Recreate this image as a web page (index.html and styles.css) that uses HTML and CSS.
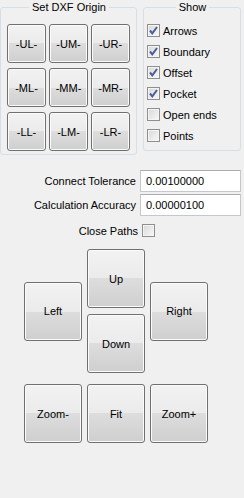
FILE: index.html
```
<!DOCTYPE html>
<html lang="en">
<head>
    <meta charset="UTF-8">
    <meta name="viewport" content="width=device-width, initial-scale=1.0">
    <title>DXF View</title>
    <link rel="stylesheet" href="styles.css">
</head>
<body>
    <div class="top">
        <fieldset class="group origin">
            <legend>Set DXF Origin</legend>
            <div class="origin-grid">
                <button class="btn">-UL-</button>
                <button class="btn">-UM-</button>
                <button class="btn">-UR-</button>
                <button class="btn">-ML-</button>
                <button class="btn">-MM-</button>
                <button class="btn">-MR-</button>
                <button class="btn">-LL-</button>
                <button class="btn">-LM-</button>
                <button class="btn">-LR-</button>
            </div>
        </fieldset>
        <fieldset class="group show">
            <legend>Show</legend>
            <label class="check"><span class="box"><svg width="11" height="11" viewBox="0 0 11 11"><path d="M2 5.5 L4.3 8.3 L9 2" fill="none" stroke="#4a5f97" stroke-width="2"/></svg></span>Arrows</label>
            <label class="check"><span class="box"><svg width="11" height="11" viewBox="0 0 11 11"><path d="M2 5.5 L4.3 8.3 L9 2" fill="none" stroke="#4a5f97" stroke-width="2"/></svg></span>Boundary</label>
            <label class="check"><span class="box"><svg width="11" height="11" viewBox="0 0 11 11"><path d="M2 5.5 L4.3 8.3 L9 2" fill="none" stroke="#4a5f97" stroke-width="2"/></svg></span>Offset</label>
            <label class="check"><span class="box"><svg width="11" height="11" viewBox="0 0 11 11"><path d="M2 5.5 L4.3 8.3 L9 2" fill="none" stroke="#4a5f97" stroke-width="2"/></svg></span>Pocket</label>
            <label class="check"><span class="box"></span>Open ends</label>
            <label class="check"><span class="box"></span>Points</label>
        </fieldset>
    </div>

    <div class="params">
        <label class="param-label" for="tolerance">Connect Tolerance</label>
        <input class="field" type="text" id="tolerance" value="0.00100000">
        <label class="param-label" for="accuracy">Calculation Accuracy</label>
        <input class="field" type="text" id="accuracy" value="0.00000100">
        <span class="param-label close-label">Close Paths</span>
        <span class="box close-box"></span>
    </div>

    <div class="pad">
        <button class="btn big left">Left</button>
        <button class="btn big up">Up</button>
        <button class="btn big down">Down</button>
        <button class="btn big right">Right</button>
    </div>

    <div class="zoom-row">
        <button class="btn big">Zoom-</button>
        <button class="btn big">Fit</button>
        <button class="btn big">Zoom+</button>
    </div>
</body>
</html>
```

FILE: styles.css
```
:root {
    --bg-color: #f0f0f0;
    --btn-border: #707070;
    --group-border: #d5dfe5;
    --text-color: #000;
}
body {
    margin: 0;
    width: 244px;
    height: 498px;
    background-color: var(--bg-color);
    color: var(--text-color);
    font-family: "Liberation Sans", Arial, sans-serif;
    font-size: 11px;
    overflow: hidden;
}
.top {
    display: flex;
    align-items: flex-start;
}
.group {
    margin: 0;
    border: 1px solid var(--group-border);
    border-radius: 3px;
    box-sizing: border-box;
    min-width: 0;
}
.group legend {
    margin: 0 auto;
    padding: 0 3px;
    line-height: 14px;
}
.origin {
    width: 137px;
    padding: 10px 5px 3px 6px;
}
.origin-grid {
    display: grid;
    grid-template-columns: repeat(3, 39px);
    grid-auto-rows: 39px;
    column-gap: 3px;
    row-gap: 5px;
}
.show {
    width: 98px;
    margin-left: 6px;
    padding: 6px 2px 4px 3px;
}
.check {
    display: flex;
    align-items: center;
    gap: 3px;
    height: 21px;
}
.box {
    display: flex;
    align-items: center;
    justify-content: center;
    width: 13px;
    height: 13px;
    box-sizing: border-box;
    border: 1px solid #8e8f8f;
    background: linear-gradient(135deg, #d8d8d8, #f8f8f8);
    box-shadow: inset 0 0 0 1px #f4f4f4;
    flex: none;
}
.btn {
    border: 1px solid var(--btn-border);
    border-radius: 3px;
    background: linear-gradient(#f2f2f2 0%, #ebebeb 50%, #dddddd 50%, #cfcfcf 100%);
    box-shadow: inset 0 0 0 1px #fbfbfb;
    font-family: inherit;
    font-size: 11px;
    color: var(--text-color);
    padding: 0;
    box-sizing: border-box;
}
.params {
    display: grid;
    grid-template-columns: 1fr 101px;
    column-gap: 4px;
    row-gap: 2px;
    align-items: center;
    margin-top: 15px;
    padding-right: 3px;
}
.param-label {
    text-align: right;
}
.field {
    height: 22px;
    box-sizing: border-box;
    border: 1px solid #c4c7cc;
    border-top-color: #abadb3;
    background: white;
    font-family: inherit;
    font-size: 11px;
    padding: 0 0 0 5px;
    margin: 0;
}
.close-label {
    margin-top: 6px;
    margin-right: -2px;
}
.close-box {
    margin-top: 6px;
    margin-left: 2px;
}
.pad {
    display: grid;
    grid-template-columns: repeat(3, 58px);
    grid-template-rows: 59px 59px;
    column-gap: 5px;
    row-gap: 6px;
    margin-top: 12px;
    padding-left: 24px;
}
.big {
    width: 58px;
    height: 59px;
}
.left {
    grid-column: 1;
    grid-row: 1 / 3;
    align-self: center;
}
.up {
    grid-column: 2;
    grid-row: 1;
}
.down {
    grid-column: 2;
    grid-row: 2;
}
.right {
    grid-column: 3;
    grid-row: 1 / 3;
    align-self: center;
}
.zoom-row {
    display: flex;
    gap: 5px;
    margin-top: 11px;
    padding-left: 24px;
}
```
